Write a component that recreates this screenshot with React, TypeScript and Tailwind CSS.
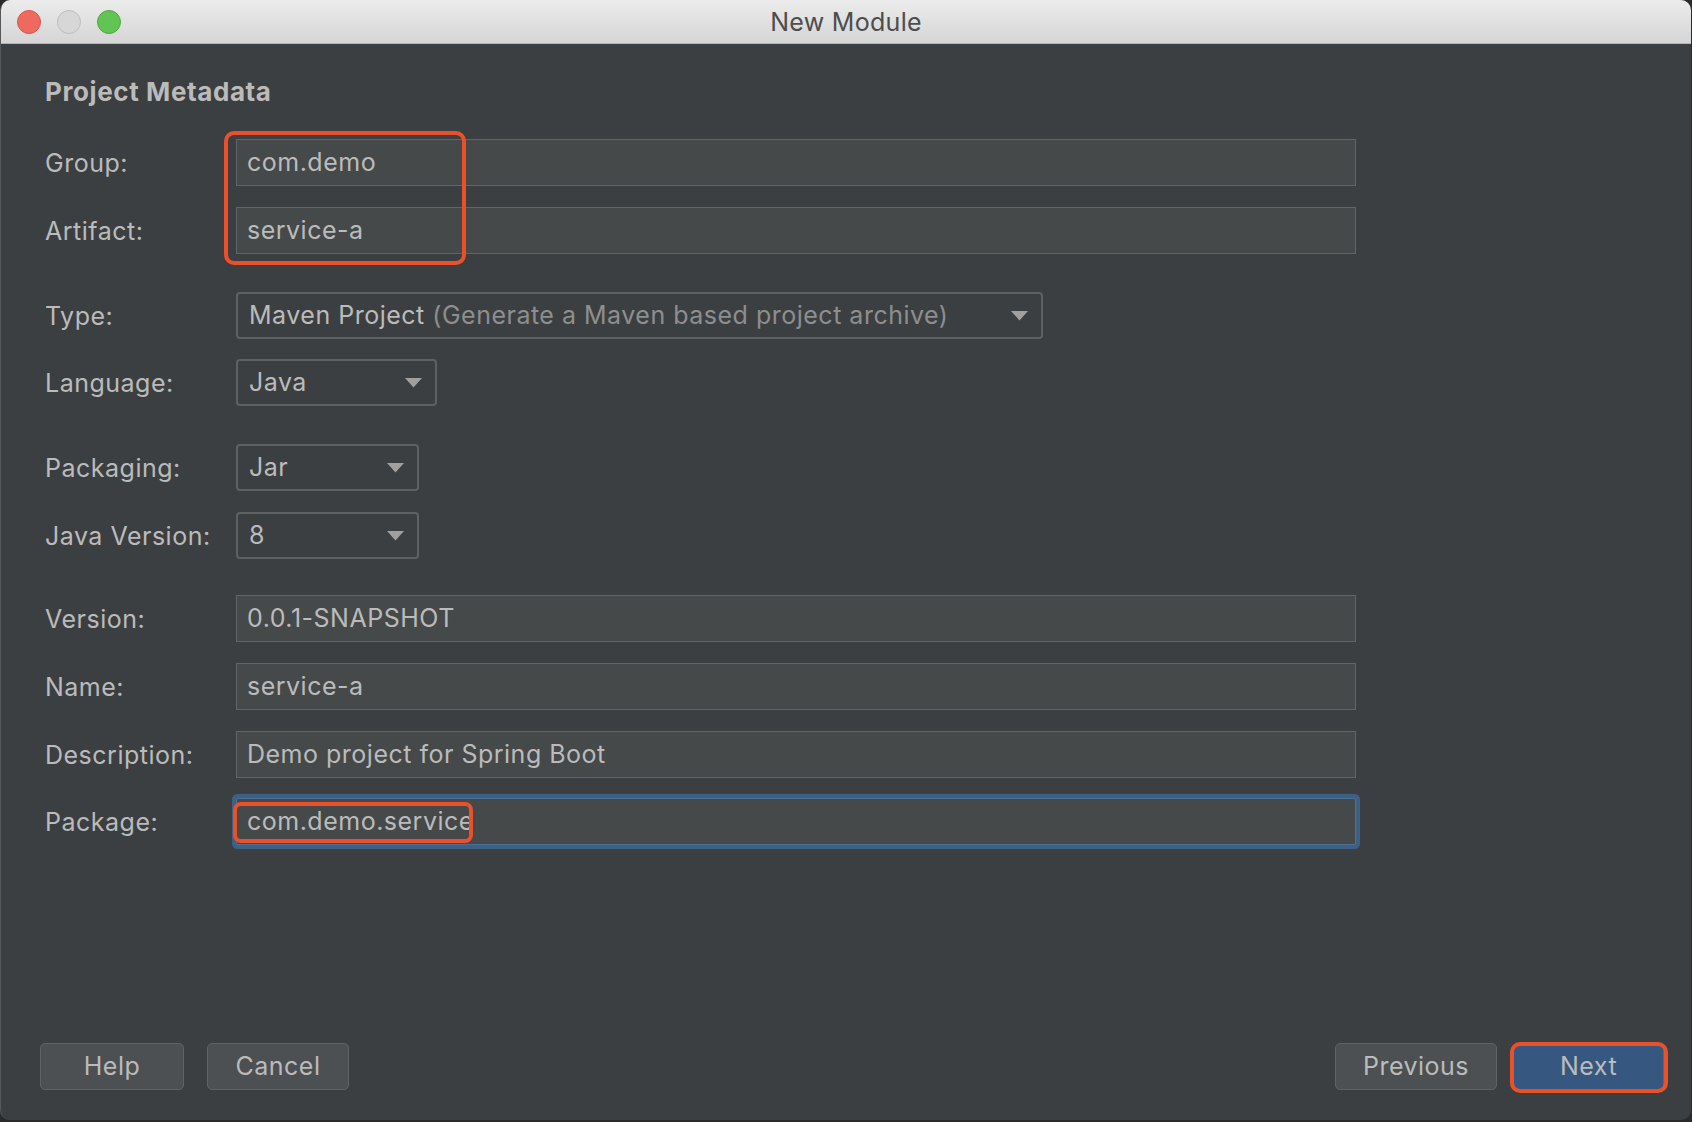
// IntelliJ "New Module" dialog (Spring Initializr metadata step), dark Darcula theme,
// with the red annotation boxes from the screenshot drawn as overlays.

import type { ReactNode } from "react";

const font = "font-['Inter','Liberation_Sans',sans-serif] tracking-[0.5px]";

function TrafficLights() {
  return (
    <div className="flex items-center gap-[16px] pl-[16px]">
      <span className="h-[24px] w-[24px] rounded-full border border-[#d8574b] bg-[#ee6a5f]" />
      <span className="h-[24px] w-[24px] rounded-full border border-[#bdbdbd] bg-[#d7d7d7]" />
      <span className="h-[24px] w-[24px] rounded-full border border-[#4ea93f] bg-[#61c454]" />
    </div>
  );
}

function Row({
  label,
  mt,
  children,
}: {
  label: string;
  mt: string;
  children: ReactNode;
}) {
  return (
    <div className={`flex items-center ${mt}`}>
      <div className="w-[191px] shrink-0 text-[25px] leading-[30px] text-[#bbbbbb]">
        {label}
      </div>
      {children}
    </div>
  );
}

function TextField({ value }: { value: string }) {
  return (
    <div className="flex h-[47px] w-[1120px] items-center border border-[#646464] bg-[#45494a] pl-[10px] text-[25px] text-[#bbbbbb]">
      {value}
    </div>
  );
}

function Caret() {
  return (
    <svg width="17" height="10" viewBox="0 0 17 10" className="shrink-0">
      <path d="M0 0 H17 L8.5 9.5 Z" fill="#a0a0a0" />
    </svg>
  );
}

function Combo({ width, children }: { width: string; children: ReactNode }) {
  return (
    <div
      className={`flex h-[47px] ${width} items-center justify-between rounded-[4px] border-2 border-[#5e6162] bg-[#3c3f41] pl-[11px] pr-[13px] text-[25px] text-[#bbbbbb]`}
    >
      <span className="truncate">{children}</span>
      <Caret />
    </div>
  );
}

function Button({
  children,
  width,
  primary,
}: {
  children: ReactNode;
  width: string;
  primary?: boolean;
}) {
  return (
    <button
      className={`flex h-[47px] ${width} items-center justify-center rounded-[5px] border text-[25px] text-[#bbbbbb] ${
        primary
          ? "border-[#4a6c93] bg-[#365880]"
          : "border-[#5f6365] bg-[#4c5052]"
      }`}
    >
      {children}
    </button>
  );
}

function Annotation({ className }: { className: string }) {
  return (
    <span
      className={`pointer-events-none absolute border-[4px] border-[#ea512b] ${className}`}
    />
  );
}

export default function App() {
  return (
    <div className={`h-[1122px] w-[1692px] bg-[#2b2b2b] ${font}`}>
      <div className="flex h-[1120px] w-[1691px] flex-col overflow-hidden rounded-[10px] border-l border-[#55585a] bg-[#3c3f41]">
        {/* title bar */}
        <header className="relative flex h-[44px] shrink-0 items-center border-b border-[#b4b4b4] bg-gradient-to-b from-[#ececec] to-[#d5d5d5]">
          <TrafficLights />
          <span className="absolute inset-x-0 top-[7px] text-center text-[25px] leading-[30px] tracking-[0.3px] text-[#4d4d4d]">
            New Module
          </span>
        </header>

        {/* form */}
        <main className="flex flex-1 flex-col pl-[44px]">
          <h1 className="mt-[33px] text-[26px] leading-[30px] font-bold tracking-[0.6px] text-[#bbbbbb]">
            Project Metadata
          </h1>

          <div className="relative mt-[32px] flex flex-col">
            <Row label="Group:" mt="mt-0">
              <TextField value="com.demo" />
            </Row>
            <Row label="Artifact:" mt="mt-[21px]">
              <TextField value="service-a" />
            </Row>
            <Annotation className="left-[179px] -top-[8px] h-[134px] w-[242px] rounded-[10px]" />
          </div>

          <Row label="Type:" mt="mt-[38px]">
            <Combo width="w-[807px]">
              Maven Project{" "}
              <span className="text-[#8e8e8e]">
                (Generate a Maven based project archive)
              </span>
            </Combo>
          </Row>
          <Row label="Language:" mt="mt-[20px]">
            <Combo width="w-[201px]">Java</Combo>
          </Row>

          <Row label="Packaging:" mt="mt-[38px]">
            <Combo width="w-[183px]">Jar</Combo>
          </Row>
          <Row label="Java Version:" mt="mt-[21px]">
            <Combo width="w-[183px]">8</Combo>
          </Row>

          <Row label="Version:" mt="mt-[36px]">
            <TextField value="0.0.1-SNAPSHOT" />
          </Row>
          <Row label="Name:" mt="mt-[21px]">
            <TextField value="service-a" />
          </Row>
          <Row label="Description:" mt="mt-[21px]">
            <TextField value="Demo project for Spring Boot" />
          </Row>
          <Row label="Package:" mt="mt-[20px]">
            <div className="relative flex h-[47px] w-[1120px] items-center rounded-[2px] border border-[#4b6f96] bg-[#45494a] pl-[10px] text-[25px] text-[#bbbbbb] shadow-[0_0_0_4px_#3d6185]">
              com.demo.service
              <Annotation className="-left-[4px] top-[3px] h-[41px] w-[240px] rounded-[8px]" />
            </div>
          </Row>

          {/* footer buttons */}
          <footer className="mt-auto mb-[30px] -ml-[5px] flex items-center pr-[27px]">
            <Button width="w-[144px]">Help</Button>
            <div className="ml-[23px]">
              <Button width="w-[142px]">Cancel</Button>
            </div>
            <div className="ml-auto">
              <Button width="w-[162px]">Previous</Button>
            </div>
            <div className="relative ml-[16px]">
              <Button width="w-[151px]" primary>
                Next
              </Button>
              <Annotation className="-top-[1px] -left-[3px] h-[51px] w-[158px] rounded-[10px]" />
            </div>
          </footer>
        </main>
      </div>
    </div>
  );
}
